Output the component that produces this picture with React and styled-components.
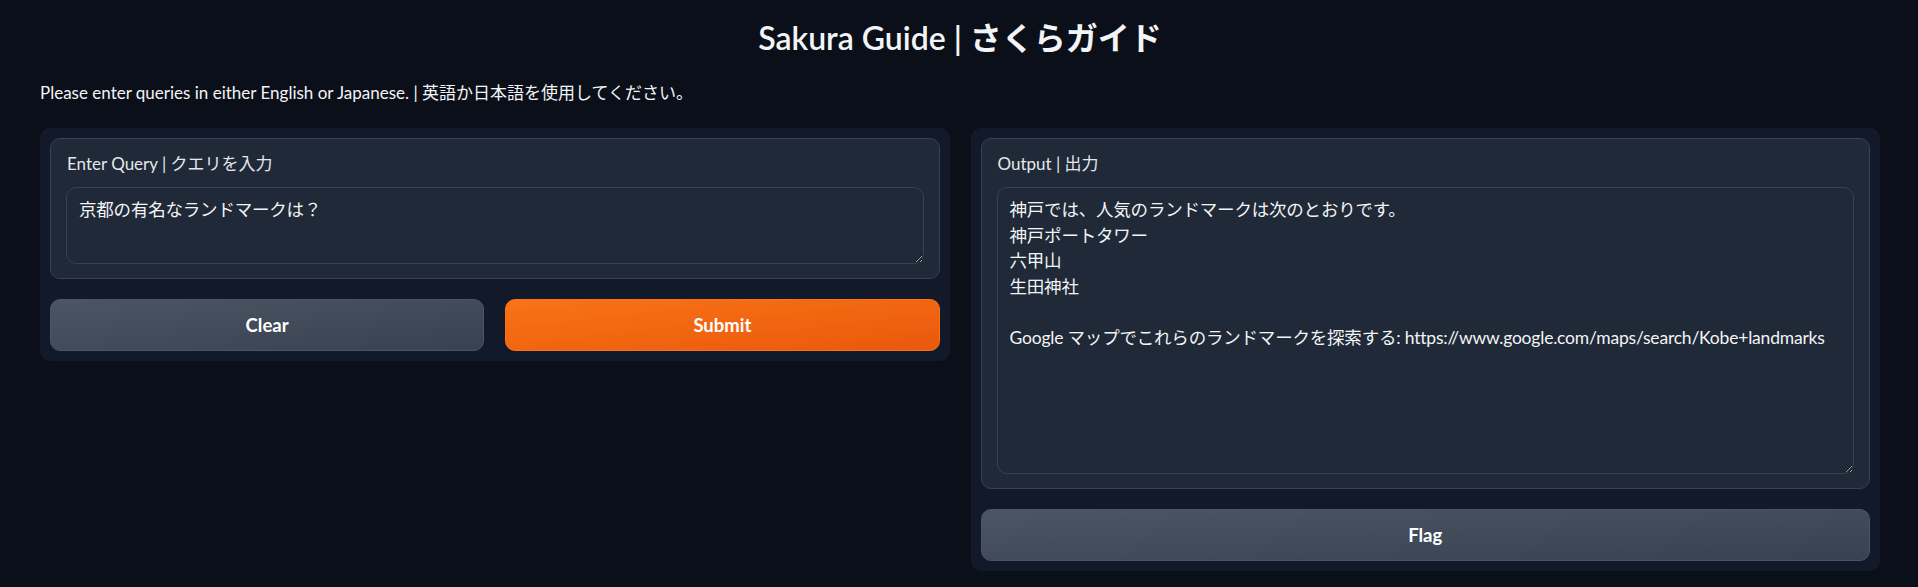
import React from 'react';
import styled, { createGlobalStyle } from 'styled-components';

const GlobalStyle = createGlobalStyle`
  html, body {
    margin: 0;
    padding: 0;
    background: #0b0f19;
  }
  body {
    font-family: Lato, "Noto Sans CJK JP", sans-serif;
    color: #f3f4f6;
  }
`;

const outputText = `神戸では、人気のランドマークは次のとおりです。
神戸ポートタワー
六甲山
生田神社

Google マップでこれらのランドマークを探索する: https://www.google.com/maps/search/Kobe+landmarks`;

const App = () => {
  return (
    <>
      <GlobalStyle />
      <Page>
        <Title>Sakura Guide | さくらガイド</Title>
        <Intro>Please enter queries in either English or Japanese. | 英語か日本語を使用してください。</Intro>
        <Columns>
          <Panel>
            <Block>
              <Label>Enter Query | クエリを入力</Label>
              <TextArea readOnly rows={2} defaultValue="京都の有名なランドマークは？" $height={77} />
            </Block>
            <ButtonRow>
              <Button>Clear</Button>
              <Button $primary>Submit</Button>
            </ButtonRow>
          </Panel>
          <Panel>
            <Block>
              <Label>Output | 出力</Label>
              <TextArea readOnly defaultValue={outputText} $height={287} />
            </Block>
            <ButtonRow>
              <Button>Flag</Button>
            </ButtonRow>
          </Panel>
        </Columns>
      </Page>
    </>
  );
};

export default App;

const Page = styled.div`
  padding: 0 38px 20px 40px;
`;

const Title = styled.h1`
  margin: 0;
  padding-top: 16px;
  text-align: center;
  font-size: 32px;
  font-weight: 600;
  line-height: 44px;
  color: #f3f4f6;
`;

const Intro = styled.p`
  margin: 20px 0 0 0;
  font-size: 17px;
  line-height: 26px;
  color: #f3f4f6;
`;

const Columns = styled.div`
  display: grid;
  grid-template-columns: 1fr 1fr;
  gap: 21px;
  align-items: start;
  margin-top: 22px;
`;

const Panel = styled.div`
  background: #121a29;
  border-radius: 10px;
  padding: 10px;
  display: flex;
  flex-direction: column;
  gap: 20px;
`;

const Block = styled.div`
  background: #1f2937;
  border: 1px solid #374151;
  border-radius: 10px;
  padding: 14px 15px 14px 15px;
  display: flex;
  flex-direction: column;
  gap: 12px;
`;

const Label = styled.span`
  font-size: 17px;
  line-height: 22px;
  color: #e5e7eb;
  padding-left: 1px;
`;

const TextArea = styled.textarea`
  box-sizing: border-box;
  width: 100%;
  height: ${(p) => p.$height}px;
  margin: 0;
  padding: 9px 12px;
  background: #1f2937;
  border: 1px solid #374151;
  border-radius: 10px;
  color: #f3f4f6;
  font-family: Lato, "Noto Sans CJK JP", sans-serif;
  font-size: 17.5px;
  line-height: 25.5px;
  letter-spacing: -0.2px;
  outline: none;
  resize: vertical;
`;

const ButtonRow = styled.div`
  display: flex;
  gap: 21px;
`;

const Button = styled.button`
  flex: 1;
  height: 52px;
  border-radius: 10px;
  border: 1px solid ${(p) => (p.$primary ? '#f97316' : '#4b5563')};
  background: ${(p) =>
    p.$primary
      ? 'linear-gradient(to bottom right, #f97316, #ea580c)'
      : 'linear-gradient(to bottom right, #4b5563, #374151)'};
  color: #ffffff;
  font-family: Lato, "Noto Sans CJK JP", sans-serif;
  font-size: 18.5px;
  font-weight: 700;
  cursor: pointer;
`;
